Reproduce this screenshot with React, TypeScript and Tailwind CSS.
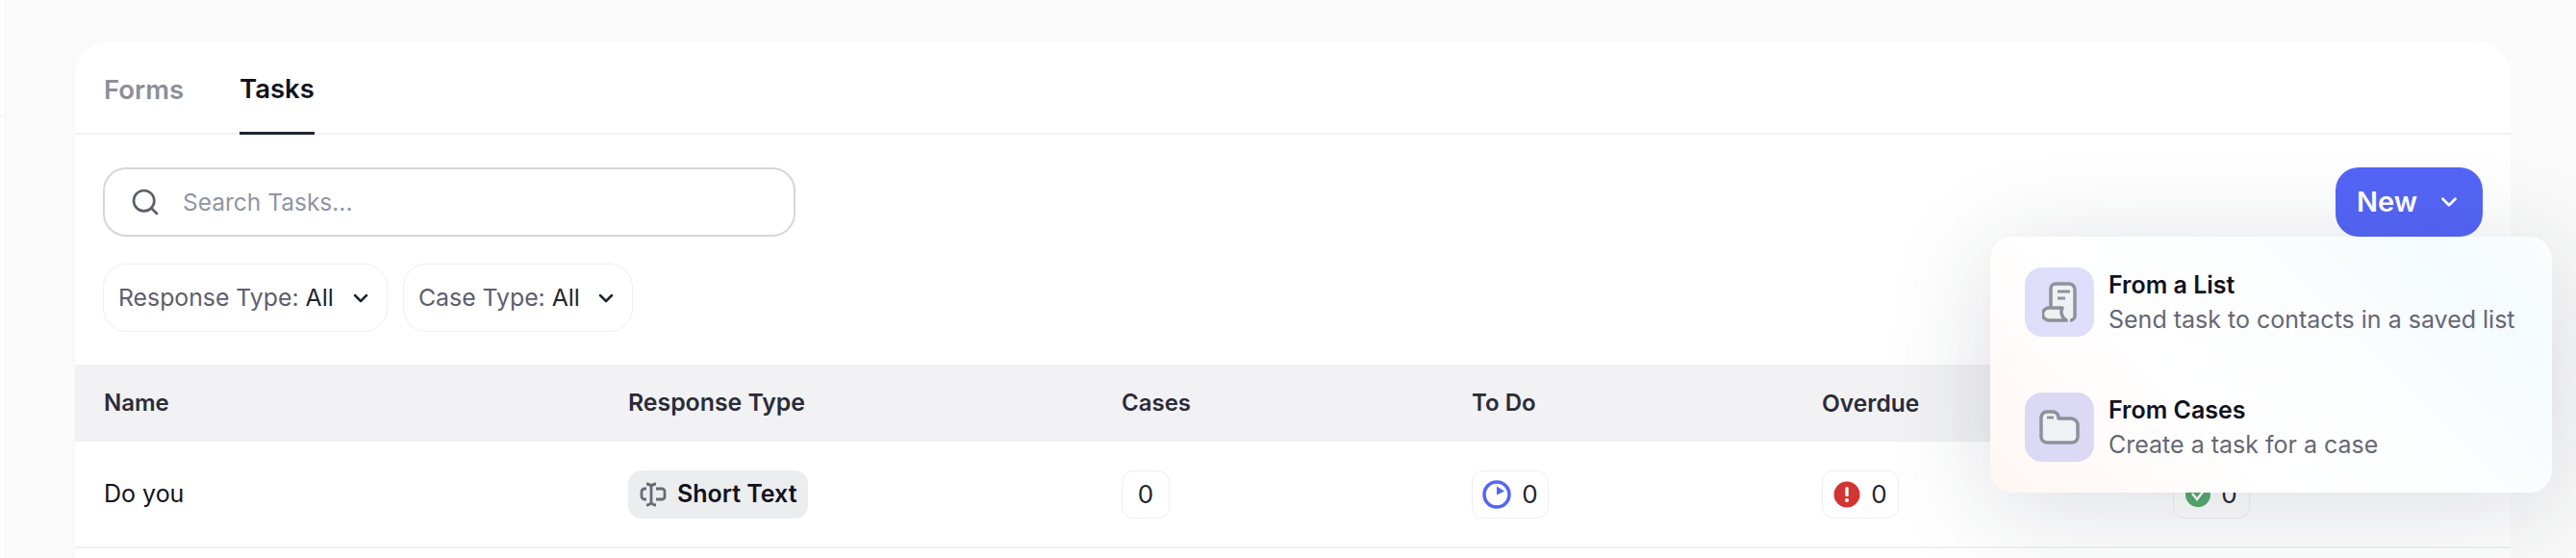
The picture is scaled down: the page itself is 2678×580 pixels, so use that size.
import React from "react";
import { Search, ChevronDown } from "lucide-react";

function Filter({ label, width }: { label: string; width: string }) {
  return (
    <div className={`flex h-[71px] items-center justify-between rounded-[24px] border border-[#eeeff1] pl-[15px] pr-[15px] text-[24.800px] ${width}`}>
      <span className="text-[#5d5e6b]">
        {label} <span className="text-[#1f2430]">All</span>
      </span>
      <ChevronDown className="h-[24px] w-[24px] text-[#1f2430]" strokeWidth={2.5} />
    </div>
  );
}

function Count({ icon, width, gap }: { icon?: React.ReactNode; width: string; gap?: string }) {
  return (
    <div className={`flex h-[50px] items-center justify-center rounded-[12px] border border-[#eeeff1] text-[26px] text-[#1f2430] ${width} ${gap ?? ""}`}>
      {icon}
      <span>0</span>
    </div>
  );
}

function MenuItem({ title, sub, tile, icon }: { title: string; sub: string; tile: string; icon: React.ReactNode }) {
  return (
    <div className="flex items-start gap-[15px]">
      <div className={`flex h-[72px] w-[72px] shrink-0 items-center justify-center rounded-[18px] ${tile}`}>{icon}</div>
      <div className="pt-[2px]">
        <div className="text-[25px] font-semibold leading-[32px] text-[#11121d]">{title}</div>
        <div className="mt-[4px] whitespace-nowrap text-[25px] leading-[32px] text-[#666773]">{sub}</div>
      </div>
    </div>
  );
}

export default function App() {
  return (
    <div className="flex h-[580px] w-[2678px] overflow-hidden bg-white font-['Inter',sans-serif]">
      <div className="w-[5px] shrink-0 pt-[120px]">
        <div className="h-px bg-[#f0f0f2]" />
      </div>
      <div className="h-full min-w-0 flex-1 border-l border-[#f2f2f3] bg-[#fafafa] pl-[72px] pr-[68px] pt-[43px]">
        <div className="relative h-[600px] rounded-t-[36px] bg-white">
          <div className="flex h-[97px] gap-[58px] border-b-2 border-[#f0f1f3] pl-[30px]">
            <div className="flex h-[97px] items-center pt-[4px] text-[27.500px] font-semibold text-[#8d8e98]">Forms</div>
            <div className="flex h-[97px] items-center border-b-[3px] border-[#1f2536] pt-[6px] text-[27.500px] font-semibold text-[#11121d]">Tasks</div>
          </div>

          <div className="flex items-start justify-between pl-[29px] pr-[29px] pt-[34px]">
            <div className="flex h-[72px] w-[720px] items-center gap-[23px] rounded-[24px] border-2 border-[#d5d6da] pl-[26px]">
              <Search className="h-[32px] w-[32px] text-[#5d5e6b]" strokeWidth={2} />
              <span className="text-[24.500px] text-[#8f96a3]">Search Tasks...</span>
            </div>
            <div className="flex h-[72px] w-[153px] items-center gap-[20px] rounded-[24px] bg-[#5465f6] pl-[22px] text-[29px] font-semibold text-white">
              New
              <ChevronDown className="h-[26px] w-[26px]" strokeWidth={2.5} />
            </div>
          </div>

          <div className="flex gap-[16px] pl-[29px] pt-[28px]">
            <Filter label="Response Type:" width="w-[296px]" />
            <Filter label="Case Type:" width="w-[239px]" />
          </div>

          <div className="mt-[34px] grid h-[80px] grid-cols-[545px_513px_364px_364px_365px_1fr] items-center border-y-2 border-[#f0f1f3] bg-[#f2f2f4] pl-[30px] text-[24px] font-semibold text-[#2b2c38]">
            <div>Name</div>
            <div className="text-[24.800px]">Response Type</div>
            <div>Cases</div>
            <div>To Do</div>
            <div className="text-[24.500px]">Overdue</div>
            <div />
          </div>

          <div className="grid h-[111px] grid-cols-[545px_513px_364px_364px_365px_1fr] items-center border-b-2 border-[#f0f1f3] pl-[30px] text-[25px] text-[#11121d]">
            <div>Do you</div>
            <div>
              <div className="flex h-[50px] w-[187px] items-center gap-[11px] rounded-[14px] bg-[#ecedef] pl-[12px] text-[25px] font-semibold">
                <svg width="28" height="26" viewBox="0 0 28 26" fill="none" stroke="#696a76" strokeWidth="2.8">
                  <path d="M7 7H5a3 3 0 0 0-3 3v5a3 3 0 0 0 3 3h2" />
                  <path d="M17 7h7a3 3 0 0 1 2 3v5a3 3 0 0 1-2 3h-7" />
                  <path d="M7 2c3 0 4 1 5 2.500C13 3 14 2 17 2M12 4v18M7 24c3 0 4-1 5-2.500 1 1.500 2 2.500 5 2.500" />
                </svg>
                <span className="whitespace-nowrap">Short Text</span>
              </div>
            </div>
            <div><Count width="w-[50px]" /></div>
            <div>
              <Count
                width="w-[80px]"
                gap="gap-[11px]"
                icon={
                  <svg width="30" height="30" viewBox="0 0 30 30">
                    <circle cx="15" cy="15" r="13" fill="none" stroke="#5465f6" strokeWidth="3.500" />
                    <path d="M15 6.500l8 5-8 4z" fill="#5465f6" />
                  </svg>
                }
              />
            </div>
            <div>
              <Count
                width="w-[80px]"
                gap="gap-[11px]"
                icon={
                  <svg width="28" height="28" viewBox="0 0 28 28">
                    <circle cx="14" cy="14" r="13.500" fill="#d33532" />
                    <rect x="12.300" y="6" width="3.400" height="10" rx="1.500" fill="#fff" />
                    <circle cx="14" cy="20" r="2" fill="#fff" />
                  </svg>
                }
              />
            </div>
            <div>
              <Count
                width="w-[80px]"
                gap="gap-[11px]"
                icon={
                  <svg width="26" height="28" viewBox="0 0 26 28">
                    <circle cx="13" cy="14" r="13" fill="#57ab6f" />
                    <path d="M7 13l5 6 7-9" fill="none" stroke="#fff" strokeWidth="2.500" />
                  </svg>
                }
              />
            </div>
          </div>

          <div className="absolute left-[1991px] top-[203px] flex h-[266px] w-[584px] flex-col gap-[58px] rounded-[24px] bg-[linear-gradient(45deg,#fff6f3_0%,#ffffff_35%,#fdfefe_55%,#f5fbfe_85%,#fbfdfe_100%)] pl-[36px] pt-[32px] shadow-[0_16px_110px_rgba(30,35,60,0.16)]">
            <MenuItem
              title="From a List"
              sub="Send task to contacts in a saved list"
              tile="bg-[#dedefb]"
              icon={
                <svg width="36" height="42" viewBox="0 0 36 42" fill="none" stroke="#8f9099" strokeWidth="3.500" strokeLinejoin="round">
                  <path d="M9 27V7a5 5 0 0 1 5-5h14a6 6 0 0 1 6 6v27a5 5 0 0 1-5 5" fill="#f0f1f5" />
                  <path d="M7 27h14c-2 4-1 10 4 13H7a6.500 6.500 0 0 1 0-13z" fill="#f0f1f5" />
                  <path d="M16 10h13M16 17h8" strokeWidth="2.800" />
                </svg>
              }
            />
            <MenuItem
              title="From Cases"
              sub="Create a task for a case"
              tile="bg-[#dcd9f5]"
              icon={
                <svg width="42" height="36" viewBox="0 0 42 36" fill="none" stroke="#8f9099" strokeWidth="3.500" strokeLinejoin="round">
                  <path d="M2 8a6 6 0 0 1 6-6h6a6 6 0 0 1 6 6v1h13a7 7 0 0 1 7 7v12a6 6 0 0 1-6 6H8a6 6 0 0 1-6-6z" fill="#f0f1f5" />
                  <path d="M8 8h7" strokeWidth="2.800" />
                </svg>
              }
            />
          </div>
        </div>
      </div>
    </div>
  );
}
